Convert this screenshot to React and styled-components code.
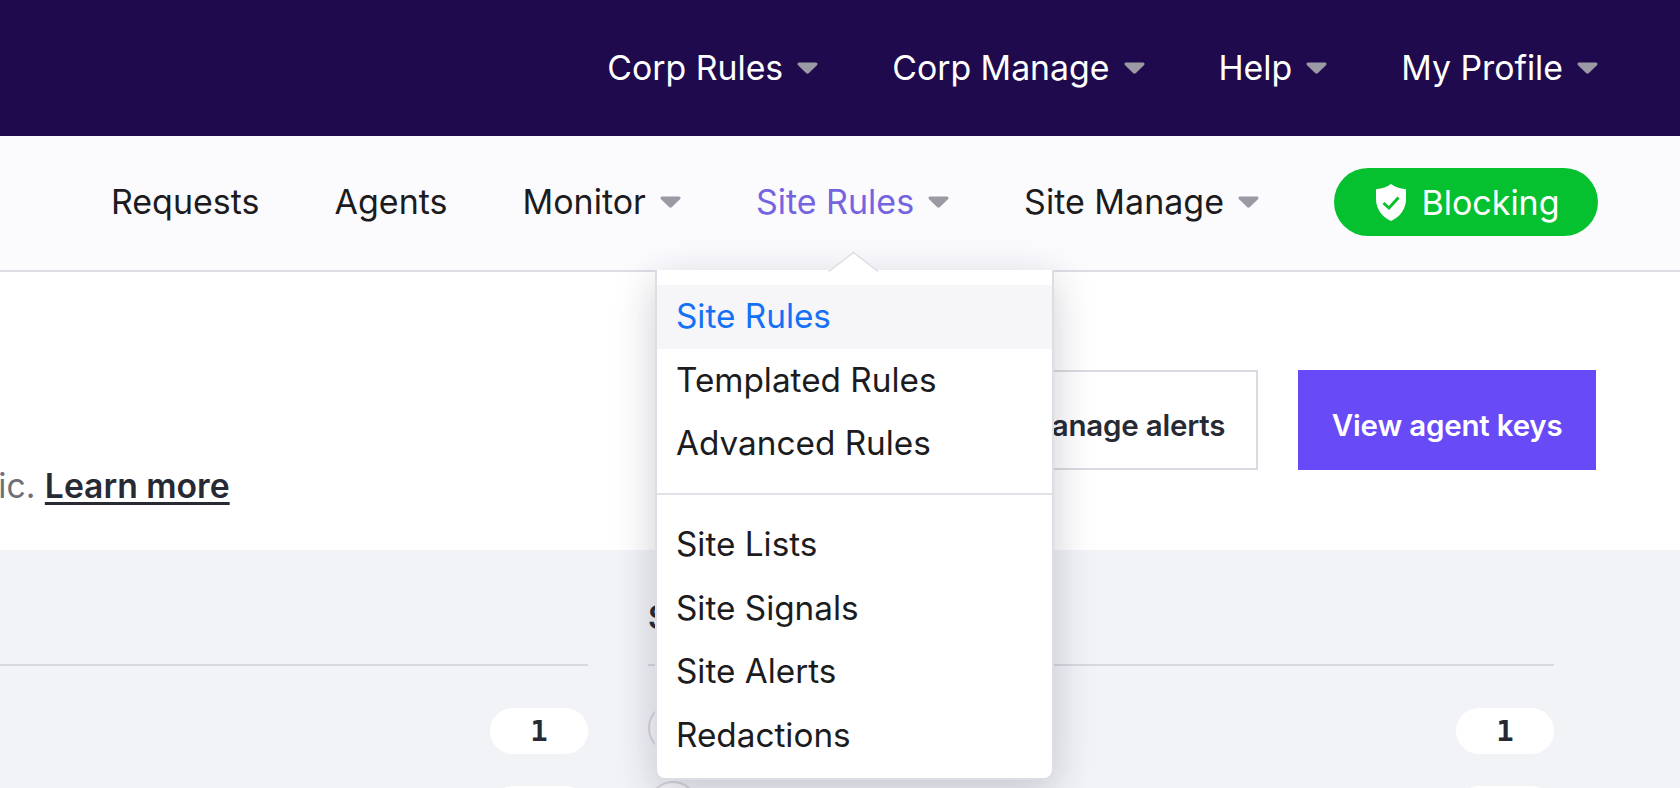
import React from "react";
import styled, { createGlobalStyle } from "styled-components";

const Global = createGlobalStyle`
  html, body { margin: 0; padding: 0; background: #fff; height: 788px; overflow: hidden; }
  * { box-sizing: border-box; }
  body { font-family: Inter, "Noto Sans", sans-serif; }
`;

const Page = styled.div`
  position: relative;
  width: 1680px;
  height: 788px;
  overflow: hidden;
`;

const TopBar = styled.header`
  height: 136px;
  background: #1f0a4d;
  display: flex;
  justify-content: flex-end;
  align-items: center;
  padding-right: 82px;
  padding-bottom: 1px;
  gap: 74px;
`;

const SubBar = styled.nav`
  height: 136px;
  background: #fbfbfe;
  border-bottom: 2px solid #dddde6;
  display: flex;
  align-items: center;
  justify-content: flex-end;
  padding-right: 82px;
  padding-bottom: 2px;
  gap: 75px;
`;

const NavItem = styled.a`
  display: inline-flex;
  align-items: center;
  gap: 14px;
  font-size: ${(p) => p.$size};
  line-height: 48px;
  white-space: nowrap;
  color: ${(p) => p.$color};
`;

const Caret = styled.svg`
  width: 21px;
  height: 12px;
  flex: none;
`;

const Pill = styled.div`
  width: 264px;
  height: 68px;
  border-radius: 34px;
  background: #05c130;
  color: #fff;
  font-size: 34px;
  display: flex;
  align-items: center;
  justify-content: center;
  gap: 15px;
  padding-left: 4px;
`;

const Main = styled.main`
  padding: 98px 84px 0 0;
`;

const HeadRow = styled.div`
  display: flex;
  justify-content: space-between;
  align-items: flex-start;
  height: 180px;
`;

const Description = styled.p`
  align-self: flex-end;
  margin: 0 0 40px -68px;
  font-size: 33.7px;
  line-height: 48px;
  color: #6f6f78;
  white-space: nowrap;
`;

const LearnLink = styled.a`
  color: #272a33;
  font-weight: 600;
  text-decoration: underline;
  text-decoration-thickness: 3px;
  text-underline-offset: 4px;
`;

const Actions = styled.div`
  display: flex;
  gap: 40px;
`;

const Button = styled.button`
  height: 100px;
  padding: 9px ${(p) => (p.$primary ? "33.5px" : "31px")} 0;
  border: ${(p) => (p.$primary ? "none" : "2px solid #d8dbe1")};
  background: ${(p) => (p.$primary ? "#684bf7" : "#fff")};
  color: ${(p) => (p.$primary ? "#fff" : "#272a33")};
  font: 600 29.5px Inter, sans-serif;
  letter-spacing: -0.2px;
  white-space: nowrap;
`;

const Panel = styled.section`
  background: #f2f3f7;
  height: 400px;
  padding: 0 42px 0 0;
  display: grid;
  grid-template-columns: 588px 906px;
  column-gap: 60px;
`;

const Column = styled.div`
  display: flex;
  flex-direction: column;
`;

const ColumnTitle = styled.h3`
  height: 116px;
  margin: 0;
  border-bottom: 2px solid #d7d8e0;
  font-size: 32px;
  font-weight: 600;
  line-height: 48px;
  padding-top: 44px;
  color: #272a33;
`;

const Row = styled.div`
  height: 78px;
  margin-top: ${(p) => (p.$first ? "42px" : "0")};
  display: flex;
  align-items: flex-start;
  justify-content: space-between;
`;

const Circle = styled.span`
  width: 50px;
  height: 50px;
  margin-top: -5px;
  border-radius: 50%;
  border: 2px solid #d5d6dd;
  background: #f7f7fa;
`;

const Spacer = styled.span``;

const Badge = styled.span`
  width: 98px;
  height: 46px;
  border-radius: 23px;
  background: #fff;
  display: flex;
  align-items: center;
  justify-content: center;
  font: 700 29px "DejaVu Sans Mono", "Liberation Mono", monospace;
  color: #272a33;
`;

const Menu = styled.div`
  position: absolute;
  left: 655px;
  top: 270px;
  width: 399px;
  height: 510px;
  background: #fff;
  border: 2px solid #dddde6;
  border-top: none;
  border-radius: 0 0 10px 10px;
  padding: 15px 0 12px;
  box-shadow: 0 10px 40px rgba(30, 30, 60, 0.22);
  &::before {
    content: "";
    position: absolute;
    left: 177.5px;
    top: -17.5px;
    width: 35px;
    height: 35px;
    background: #fff;
    border-top: 2px solid #dddde6;
    border-left: 2px solid #dddde6;
    transform: scaleY(0.78) rotate(45deg);
    clip-path: polygon(0 0, 100% 0, 0 100%);
  }
`;

const MenuItem = styled.a`
  display: block;
  height: 63.5px;
  line-height: 63.5px;
  padding-left: 19px;
  font-size: 33.3px;
  color: ${(p) => (p.$active ? "#1471f5" : "#1c1c20")};
  background: ${(p) => (p.$active ? "#f6f6f8" : "transparent")};
`;

const MenuDivider = styled.hr`
  height: 2px;
  border: none;
  margin: 17px 0 18.5px;
  background: #e0e0e7;
`;

const CaretIcon = () => (
  <Caret viewBox="0 0 21 12">
    <path d="M2 0.5h17c1.3 0 2 1.4 1.2 2.4l-8.5 8.3c-.7.6-1.7.6-2.4 0L.8 2.9C0 1.9.7.5 2 .5z" fill="#9b99a3" />
  </Caret>
);

const ShieldIcon = () => (
  <svg width="30" height="37" viewBox="0 0 30 37">
    <path d="M15 0 C19 3 24 4.5 29 5 C29.6 5 30 5.5 30 6 L30 15 C30 25 24 33 15 37 C6 33 0 25 0 15 L0 6 C0 5.5 .4 5 1 5 C6 4.5 11 3 15 0 Z" fill="#fff" />
    <path d="M7.5 19 L13 24 L22.5 13.5" fill="none" stroke="#05c130" strokeWidth="3" />
  </svg>
);

const top = ["Corp Rules", "Corp Manage", "Help", "My Profile"];
const sub = [
  ["Requests", false],
  ["Agents", false],
  ["Monitor", true],
  ["Site Rules", true, true],
  ["Site Manage", true],
];

export default function App() {
  return (
    <Page>
      <Global />
      <TopBar>
        {top.map((t) => (
          <NavItem key={t} $color="#fff" $size="33.8px">
            {t}
            <CaretIcon />
          </NavItem>
        ))}
      </TopBar>
      <SubBar>
        {sub.map(([t, caret, active]) => (
          <NavItem key={t} $color={active ? "#7564e0" : "#1c1c20"} $size="34px">
            {t}
            {caret && <CaretIcon />}
          </NavItem>
        ))}
        <Pill>
          <ShieldIcon />
          Blocking
        </Pill>
      </SubBar>
      <Main>
        <HeadRow>
          <Description>
            traffic. <LearnLink>Learn more</LearnLink>
          </Description>
          <Actions>
            <Button>Manage alerts</Button>
            <Button $primary>View agent keys</Button>
          </Actions>
        </HeadRow>
      </Main>
      <Panel>
        <Column>
          <ColumnTitle />
          <Row $first>
            <Spacer />
            <Badge>1</Badge>
          </Row>
          <Row>
            <Spacer />
            <Badge>1</Badge>
          </Row>
        </Column>
        <Column>
          <ColumnTitle>Signals</ColumnTitle>
          <Row $first>
            <Circle />
            <Badge>1</Badge>
          </Row>
          <Row>
            <Circle />
            <Badge>1</Badge>
          </Row>
        </Column>
      </Panel>
      <Menu>
        <MenuItem $active>Site Rules</MenuItem>
        <MenuItem>Templated Rules</MenuItem>
        <MenuItem>Advanced Rules</MenuItem>
        <MenuDivider />
        <MenuItem>Site Lists</MenuItem>
        <MenuItem>Site Signals</MenuItem>
        <MenuItem>Site Alerts</MenuItem>
        <MenuItem>Redactions</MenuItem>
      </Menu>
    </Page>
  );
}
